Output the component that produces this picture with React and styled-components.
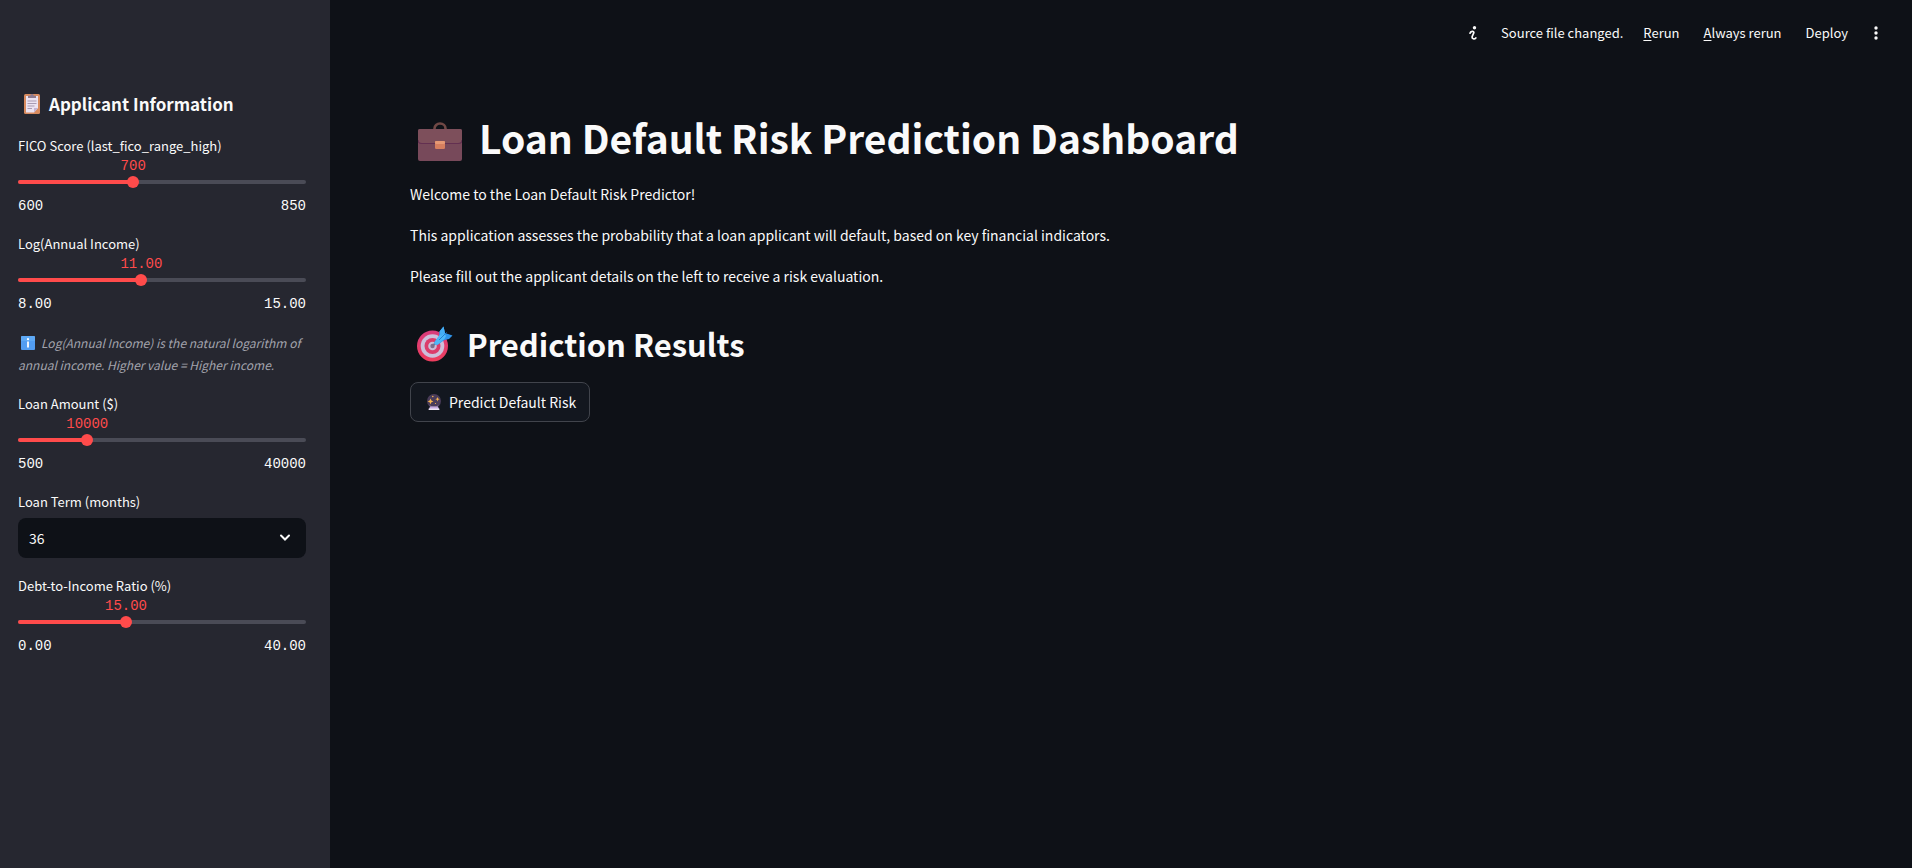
import React, { useState } from "react";
import styled, { createGlobalStyle } from "styled-components";

const colors = {
  page: "#0e1117",
  sidebar: "#262730",
  text: "#fafafa",
  muted: "#a3a4ad",
  accent: "#ff4b4b",
  rail: "#4a4b56",
  border: "#41444c",
  button: "#13171f",
};

const sans = `"Noto Sans CJK SC", "Noto Sans", sans-serif`;
const mono = `"Liberation Mono", monospace`;

const GlobalStyle = createGlobalStyle`
  *, *::before, *::after { box-sizing: border-box; }
  body {
    margin: 0;
    background: ${colors.page};
    color: ${colors.text};
    font-family: ${sans};
    font-size: 14px;
  }
  button, input, select { font: inherit; color: inherit; }
`;

const Shell = styled.div`
  display: flex;
  min-height: 100vh;
`;

const Sidebar = styled.aside`
  flex: none;
  width: 330px;
  padding: 92px 24px 40px 18px;
  background: ${colors.sidebar};
`;

const SidebarTitle = styled.h2`
  display: flex;
  align-items: center;
  gap: 8px;
  margin: 0 0 20px;
  padding-left: 5px;
  font-size: 17px;
  font-weight: 600;
  line-height: 24px;
`;

const Form = styled.form`
  display: flex;
  flex-direction: column;
  gap: 18px;
`;

const Field = styled.div`
  display: flex;
  flex-direction: column;
`;

const Label = styled.label`
  font-size: 13px;
  line-height: 20px;
`;

const Value = styled.output`
  width: max-content;
  transform: translateX(-50%);
  color: ${colors.accent};
  font-family: ${mono};
  font-size: 14px;
  line-height: 20px;
`;

const Slider = styled.div`
  display: grid;
  align-items: center;
  margin-bottom: 8px;
`;

const Rail = styled.div`
  grid-area: 1 / 1;
  height: 4px;
  border-radius: 2px;
  overflow: hidden;
  background: ${colors.rail};
`;

const Fill = styled.div`
  height: 100%;
  background: ${colors.accent};
`;

const Range = styled.input`
  grid-area: 1 / 1;
  appearance: none;
  width: calc(100% + 12px);
  height: 12px;
  margin: 0 -6px;
  background: transparent;
  cursor: pointer;

  &::-webkit-slider-thumb {
    appearance: none;
    width: 12px;
    height: 12px;
    border-radius: 50%;
    background: ${colors.accent};
  }
`;

const Limits = styled.div`
  display: flex;
  justify-content: space-between;
  font-family: ${mono};
  font-size: 14px;
  line-height: 20px;
`;

const Caption = styled.p`
  margin: 0;
  color: ${colors.muted};
  font-size: 12px;
  font-style: italic;
  line-height: 22px;

  svg {
    margin: 0 6px 0 3px;
    vertical-align: -2px;
  }
`;

const SelectBox = styled.div`
  display: grid;
  align-items: center;
  margin-top: 6px;

  svg {
    grid-area: 1 / 1;
    justify-self: end;
    margin-right: 15px;
    pointer-events: none;
  }
`;

const Select = styled.select`
  grid-area: 1 / 1;
  appearance: none;
  width: 100%;
  height: 40px;
  padding: 0 11px;
  border: 0;
  border-radius: 8px;
  background: ${colors.page};
`;

const Content = styled.div`
  flex: 1;
  min-width: 0;
`;

const Toolbar = styled.header`
  display: flex;
  align-items: center;
  justify-content: flex-end;
  height: 66px;
  padding-right: 31px;
  font-size: 13px;
`;

const Status = styled.span`
  margin: 0 20px 0 24px;
  line-height: 20px;
`;

const ToolButton = styled.button`
  display: flex;
  align-items: center;
  padding: 0;
  border: 0;
  background: none;
  line-height: 20px;
  margin-right: ${({ $after }) => $after || 0}px;
  cursor: pointer;
`;

const Key = styled.span`
  text-decoration: underline;
  text-underline-offset: 2px;
`;

const Main = styled.main`
  padding: 44px 80px;
`;

const Title = styled.h1`
  display: flex;
  align-items: center;
  gap: 17px;
  margin: 0;
  padding-left: 8px;
  font-size: 39px;
  font-weight: 700;
  line-height: 54px;

  svg {
    margin-top: 8px;
  }
`;

const Intro = styled.div`
  display: flex;
  flex-direction: column;
  gap: 15px;
  margin: 17px 0 34px;
`;

const Paragraph = styled.p`
  margin: 0;
  line-height: 26px;
`;

const Heading = styled.h2`
  display: flex;
  align-items: center;
  gap: 14px;
  margin: 0 0 17px;
  padding-left: 7px;
  font-size: 31px;
  font-weight: 600;
  line-height: 42px;
`;

const PredictButton = styled.button`
  display: flex;
  align-items: center;
  gap: 7px;
  height: 40px;
  padding: 0 13px 0 15px;
  border: 1px solid ${colors.border};
  border-radius: 8px;
  background: ${colors.button};
  cursor: pointer;
`;

const ClipboardIcon = () => (
  <svg width="18" height="22" viewBox="0 0 18 22" aria-hidden="true">
    <rect x="1" y="1" width="16" height="20" rx="1.5" fill="#d88b5f" />
    <path d="M3 3h12v12l-4 4.5H3z" fill="#ece3f2" />
    <path d="M15 15l-4 4.5V15z" fill="#c4b3d3" />
    <path d="M5 5V2.8h2.2a1.8 1.8 0 0 1 3.6 0H13V5z" fill="#8d7b91" />
    <path d="M4.5 8h9M4.5 10.5h9M4.5 13h7M4.5 15.5h4.5" stroke="#a99bb3" />
  </svg>
);

const InfoIcon = () => (
  <svg width="14" height="14" viewBox="0 0 14 14" aria-hidden="true">
    <rect width="14" height="14" rx="1" fill="#529df2" />
    <path d="M0 1a1 1 0 0 1 1-1h12a1 1 0 0 1 1 1v4H0z" fill="#67b1f7" opacity=".6" />
    <circle cx="7" cy="3.2" r="1.1" fill="#fff" />
    <path d="M7 5.5v6" stroke="#fff" strokeWidth="1.8" />
  </svg>
);

const BriefcaseIcon = () => (
  <svg width="44" height="39" viewBox="0 0 44 39" aria-hidden="true">
    <path d="M16.5 8V6.500a5.500 5 0 0 1 11 0V8" fill="none" stroke="#704845" strokeWidth="2.6" />
    <rect y="7" width="44" height="32" rx="2" fill="#77495a" />
    <path d="M0 9a2 2 0 0 1 2-2h40a2 2 0 0 1 2 2v9q0 3.500-4 3.500H4q-4 0-4-3.500z" fill="#7d4f5b" />
    <path d="M0 18q0 3.500 4 3.500h36q4 0 4-3.500" fill="none" stroke="#633051" strokeWidth="1.200" />
    <rect x="17" y="19" width="10" height="8" rx="1.200" fill="#d67f5f" />
    <rect x="17" y="19" width="10" height="3" rx="1.200" fill="#e69974" />
  </svg>
);

const TargetIcon = () => (
  <svg width="36" height="36" viewBox="0 0 36 36" aria-hidden="true">
    <defs>
      <linearGradient id="ring" x1="0" y1="0" x2="0" y2="1">
        <stop offset="0" stopColor="#d83c7c" />
        <stop offset="1" stopColor="#ee3d5d" />
      </linearGradient>
    </defs>
    <circle cx="15.500" cy="20" r="15.500" fill="url(#ring)" />
    <circle cx="15.500" cy="20" r="11.800" fill="#cdbfdb" />
    <circle cx="15.500" cy="20" r="8" fill="#dc3b6b" />
    <circle cx="15.500" cy="20" r="4.300" fill="#cbbdd8" />
    <circle cx="15.500" cy="20" r="2.200" fill="#80708e" />
    <path d="M15.500 20L20 15.500" stroke="#78708c" strokeWidth="1.800" />
    <path d="M17.500 16l4.500-6 .5-4.500L26.500.5l1.500 6.500 7.500 2.500-3.500 3.500-4.500 1-6.500 4.500q-4.500 1-3.500-2.500z" fill="#2f94ea" />
    <path d="M17.500 16l5.500-7.500 4-1.500 2 3-1.500 3-6.500 5.500q-4.500 1-3.500-2.500z" fill="#4fb8f8" />
    <path d="M22.500 5.500L26.500.5 28 7l-4 3z" fill="#45aef5" />
    <path d="M22 14L29.500 6.500" stroke="#247ed2" strokeWidth="1" />
  </svg>
);

const CrystalBallIcon = () => (
  <svg width="16" height="17" viewBox="0 0 16 17" aria-hidden="true">
    <circle cx="8" cy="7" r="7" fill="#4a3c59" />
    <path d="M3 10.500a7 7 0 0 0 10 0A5.500 5.500 0 0 1 3 10.500z" fill="#73627e" />
    <path d="M4 12.500h8l1.300 3.500H2.700z" fill="#c5aae0" />
    <path d="M2.700 14.500h10.600V16H2.700z" fill="#efe6f6" />
    <path d="M4.500 4.500l.9 2 2 .9-2 .9-.9 2-.9-2-2-.9 2-.9zM11.500 3l.6 1.600 1.600.6-1.600.6-.6 1.600-.6-1.600-1.600-.6 1.600-.6z" fill="#f7b44d" />
    <circle cx="6.800" cy="2.500" r=".8" fill="#f7b44d" />
    <circle cx="9.500" cy="9.500" r=".6" fill="#f7b44d" />
  </svg>
);

const ChevronIcon = () => (
  <svg width="12" height="8" viewBox="0 0 12 8" fill="none" aria-hidden="true">
    <path d="M2 1.500l4 4 4-4" stroke={colors.text} strokeWidth="2" strokeLinecap="round" />
  </svg>
);

const StatusIcon = () => (
  <svg width="8" height="14" viewBox="0 0 8 14" fill="none" aria-hidden="true">
    <circle cx="5.500" cy="1.700" r="1.700" fill={colors.text} />
    <path d="M1 7.200C1.500 5.300 5.200 4.500 4.800 6.800L3.200 10.500C2.600 13 5.500 13.500 6.800 12" stroke={colors.text} strokeWidth="1.700" strokeLinecap="round" />
  </svg>
);

const MenuIcon = () => (
  <svg width="10" height="14" viewBox="0 0 10 14" fill={colors.text} aria-hidden="true">
    <circle cx="5" cy="2" r="1.700" />
    <circle cx="5" cy="7" r="1.700" />
    <circle cx="5" cy="12" r="1.700" />
  </svg>
);

function SliderField({ id, label, min, max, step, initial, digits = 0 }) {
  const [value, setValue] = useState(initial);
  const position = `${((value - min) / (max - min)) * 100}%`;
  return (
    <Field>
      <Label htmlFor={id}>{label}</Label>
      <Value htmlFor={id} style={{ marginLeft: position }}>
        {value.toFixed(digits)}
      </Value>
      <Slider>
        <Rail>
          <Fill style={{ width: position }} />
        </Rail>
        <Range
          id={id}
          type="range"
          min={min}
          max={max}
          step={step}
          value={value}
          onChange={(event) => setValue(Number(event.target.value))}
        />
      </Slider>
      <Limits>
        <span>{min.toFixed(digits)}</span>
        <span>{max.toFixed(digits)}</span>
      </Limits>
    </Field>
  );
}

export default function App() {
  return (
    <>
      <GlobalStyle />
      <Shell>
        <Sidebar>
          <SidebarTitle>
            <ClipboardIcon />
            Applicant Information
          </SidebarTitle>
          <Form>
            <SliderField id="fico" label="FICO Score (last_fico_range_high)" min={600} max={850} step={1} initial={700} />
            <SliderField id="income" label="Log(Annual Income)" min={8} max={15} step={0.01} initial={11} digits={2} />
            <Caption>
              <InfoIcon />
              Log(Annual Income) is the natural logarithm of
              <br />
              annual income. Higher value = Higher income.
            </Caption>
            <SliderField id="amount" label="Loan Amount ($)" min={500} max={40000} step={100} initial={10000} />
            <Field>
              <Label htmlFor="term">Loan Term (months)</Label>
              <SelectBox>
                <Select id="term" defaultValue="36">
                  <option>36</option>
                  <option>60</option>
                </Select>
                <ChevronIcon />
              </SelectBox>
            </Field>
            <SliderField id="dti" label="Debt-to-Income Ratio (%)" min={0} max={40} step={0.01} initial={15} digits={2} />
          </Form>
        </Sidebar>
        <Content>
          <Toolbar>
            <StatusIcon />
            <Status>Source file changed.</Status>
            <ToolButton $after={24}>
              <span><Key>R</Key>erun</span>
            </ToolButton>
            <ToolButton $after={24}>
              <span><Key>A</Key>lways rerun</span>
            </ToolButton>
            <ToolButton $after={23}>Deploy</ToolButton>
            <ToolButton aria-label="Main menu">
              <MenuIcon />
            </ToolButton>
          </Toolbar>
          <Main>
            <Title>
              <BriefcaseIcon />
              Loan Default Risk Prediction Dashboard
            </Title>
            <Intro>
              <Paragraph>Welcome to the Loan Default Risk Predictor!</Paragraph>
              <Paragraph>
                This application assesses the probability that a loan applicant will default, based on key financial
                indicators.
              </Paragraph>
              <Paragraph>Please fill out the applicant details on the left to receive a risk evaluation.</Paragraph>
            </Intro>
            <Heading>
              <TargetIcon />
              Prediction Results
            </Heading>
            <PredictButton type="button">
              <CrystalBallIcon />
              Predict Default Risk
            </PredictButton>
          </Main>
        </Content>
      </Shell>
    </>
  );
}
